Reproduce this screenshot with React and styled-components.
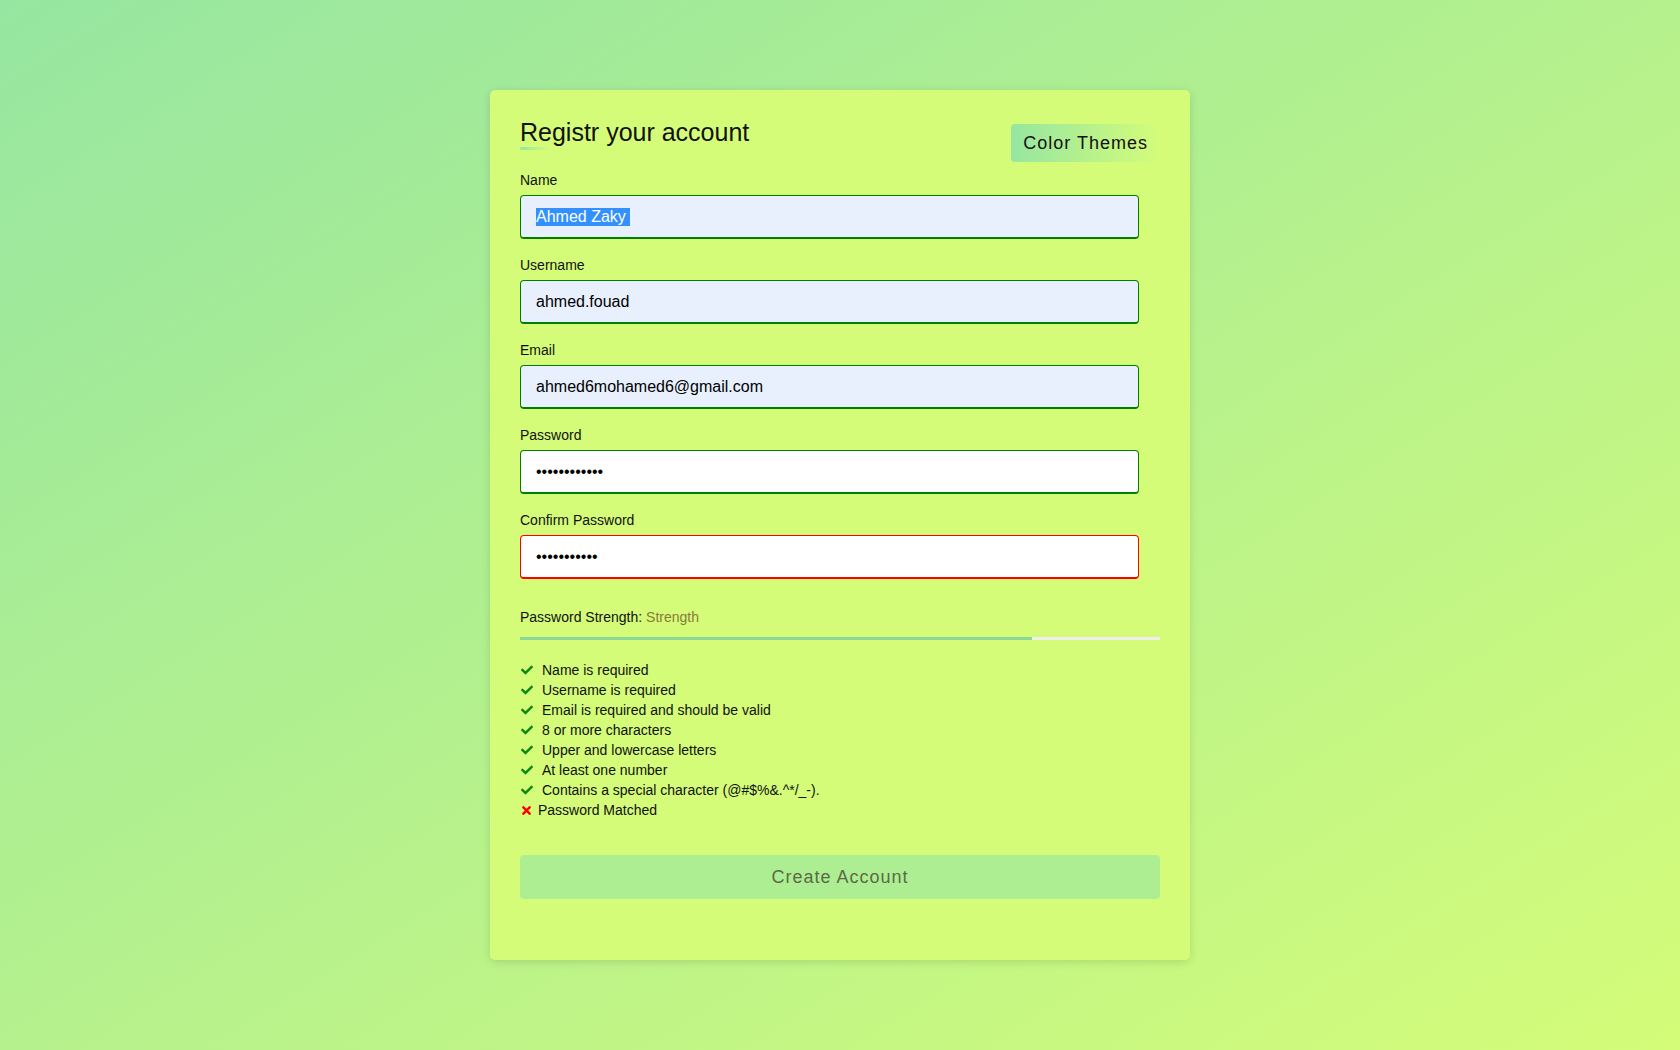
import React, { useEffect, useRef } from "react";
import styled, { createGlobalStyle } from "styled-components";
import { FaCheck, FaTimes } from "react-icons/fa";

const GlobalStyle = createGlobalStyle`
  html, body {
    margin: 0;
    padding: 0;
  }
  body {
    font-family: "Liberation Sans", Arial, sans-serif;
    color: #111;
    background: linear-gradient(to bottom right, #96e6a1, #d4fc79);
    min-height: 100vh;
  }
  * { box-sizing: border-box; }
`;

const Page = styled.div`
  min-height: 100vh;
  display: flex;
  align-items: center;
  justify-content: center;
`;

const Card = styled.form`
  width: 700px;
  background: #d4fc79;
  border-radius: 5px;
  box-shadow: 0 2px 10px rgba(0, 0, 0, 0.13);
  padding: 30px 30px 61px;
  display: flex;
  flex-direction: column;
`;

const Header = styled.div`
  display: flex;
  justify-content: space-between;
  align-items: flex-start;
  margin-bottom: 10px;
`;

const TitleBlock = styled.div`
  display: flex;
  flex-direction: column;
`;

const Title = styled.h1`
  margin: 0;
  font-size: 25px;
  line-height: 25px;
  font-weight: 400;
  color: #111;
`;

const TitleBar = styled.span`
  display: block;
  width: 30px;
  height: 3px;
  margin-top: 2px;
  border-radius: 2px;
  background: linear-gradient(to right, #96e6a1, #d4fc79);
`;

const ThemeButton = styled.button`
  margin-top: 4px;
  height: 38px;
  padding: 0 12px;
  border: none;
  border-radius: 4px;
  background: linear-gradient(to right, #96e6a1, #d4fc79);
  font-family: "Liberation Sans", Arial, sans-serif;
  font-size: 18px;
  letter-spacing: 1px;
  color: #111;
  cursor: pointer;
`;

const Field = styled.div`
  display: flex;
  flex-direction: column;
  margin-bottom: 18px;
`;

const Label = styled.label`
  font-size: 14px;
  line-height: 16px;
  margin-bottom: 7px;
  color: #111;
`;

const Input = styled.input`
  width: calc(100% - 21px);
  height: 44px;
  padding: 0 15px;
  border: 1px solid ${(p) => (p.$invalid ? "#ff0000" : "#008000")};
  border-bottom-width: 2px;
  border-radius: 4px;
  background: ${(p) => (p.$filled ? "#e8f0fe" : "#ffffff")};
  font-family: "Liberation Sans", Arial, sans-serif;
  font-size: 16px;
  color: #000;
  outline: none;

  &::selection {
    background: #3390ff;
    color: #fff;
  }
`;

const StrengthText = styled.div`
  margin-top: 12px;
  font-size: 14px;
  line-height: 16px;
  color: #111;
`;

const StrengthValue = styled.span`
  color: #8a7a3a;
`;

const Track = styled.div`
  margin-top: 12px;
  height: 3px;
  background: #eeeeee;
`;

const Fill = styled.div`
  height: 100%;
  background: #8cd896;
`;

const List = styled.ul`
  list-style: none;
  margin: 20px 0 0;
  padding: 0;
`;

const Item = styled.li`
  display: flex;
  align-items: center;
  gap: ${(p) => (p.$ok ? "9px" : "5px")};
  height: 20px;
  font-size: 14px;
  line-height: 20px;
  color: #111;
  svg {
    flex: none;
    margin-left: ${(p) => (p.$ok ? "1px" : "0")};
    color: ${(p) => (p.$ok ? "#0b870b" : "#ff0000")};
  }
`;

const Submit = styled.button`
  margin-top: 35px;
  height: 44px;
  width: 100%;
  border: none;
  border-radius: 4px;
  background: #aeee93;
  color: #5b6a45;
  font-family: "Liberation Sans", Arial, sans-serif;
  font-size: 18px;
  letter-spacing: 1px;
`;

const checks = [
  { ok: true, text: "Name is required" },
  { ok: true, text: "Username is required" },
  { ok: true, text: "Email is required and should be valid" },
  { ok: true, text: "8 or more characters" },
  { ok: true, text: "Upper and lowercase letters" },
  { ok: true, text: "At least one number" },
  { ok: true, text: "Contains a special character (@#$%&.^*/_-)." },
  { ok: false, text: "Password Matched" },
];

export default function App() {
  const nameRef = useRef(null);

  useEffect(() => {
    const el = nameRef.current;
    if (el) {
      el.focus();
      el.setSelectionRange(0, el.value.length);
    }
  }, []);

  return (
    <>
      <GlobalStyle />
      <Page>
        <Card onSubmit={(e) => e.preventDefault()}>
          <Header>
            <TitleBlock>
              <Title>Registr your account</Title>
              <TitleBar />
            </TitleBlock>
            <ThemeButton type="button">Color Themes</ThemeButton>
          </Header>

          <Field>
            <Label>Name</Label>
            <Input ref={nameRef} $filled defaultValue="Ahmed Zaky " />
          </Field>
          <Field>
            <Label>Username</Label>
            <Input $filled defaultValue="ahmed.fouad" />
          </Field>
          <Field>
            <Label>Email</Label>
            <Input $filled defaultValue="ahmed6mohamed6@gmail.com" />
          </Field>
          <Field>
            <Label>Password</Label>
            <Input type="password" defaultValue="Ahmed@123456" />
          </Field>
          <Field>
            <Label>Confirm Password</Label>
            <Input type="password" $invalid defaultValue="Ahmed@12345" />
          </Field>

          <StrengthText>
            Password Strength: <StrengthValue>Strength</StrengthValue>
          </StrengthText>
          <Track>
            <Fill style={{ width: "80%" }} />
          </Track>

          <List>
            {checks.map((c) => (
              <Item key={c.text} $ok={c.ok}>
                {c.ok ? <FaCheck size={12} /> : <FaTimes size={13} />}
                <span>{c.text}</span>
              </Item>
            ))}
          </List>

          <Submit type="submit" disabled>
            Create Account
          </Submit>
        </Card>
      </Page>
    </>
  );
}
